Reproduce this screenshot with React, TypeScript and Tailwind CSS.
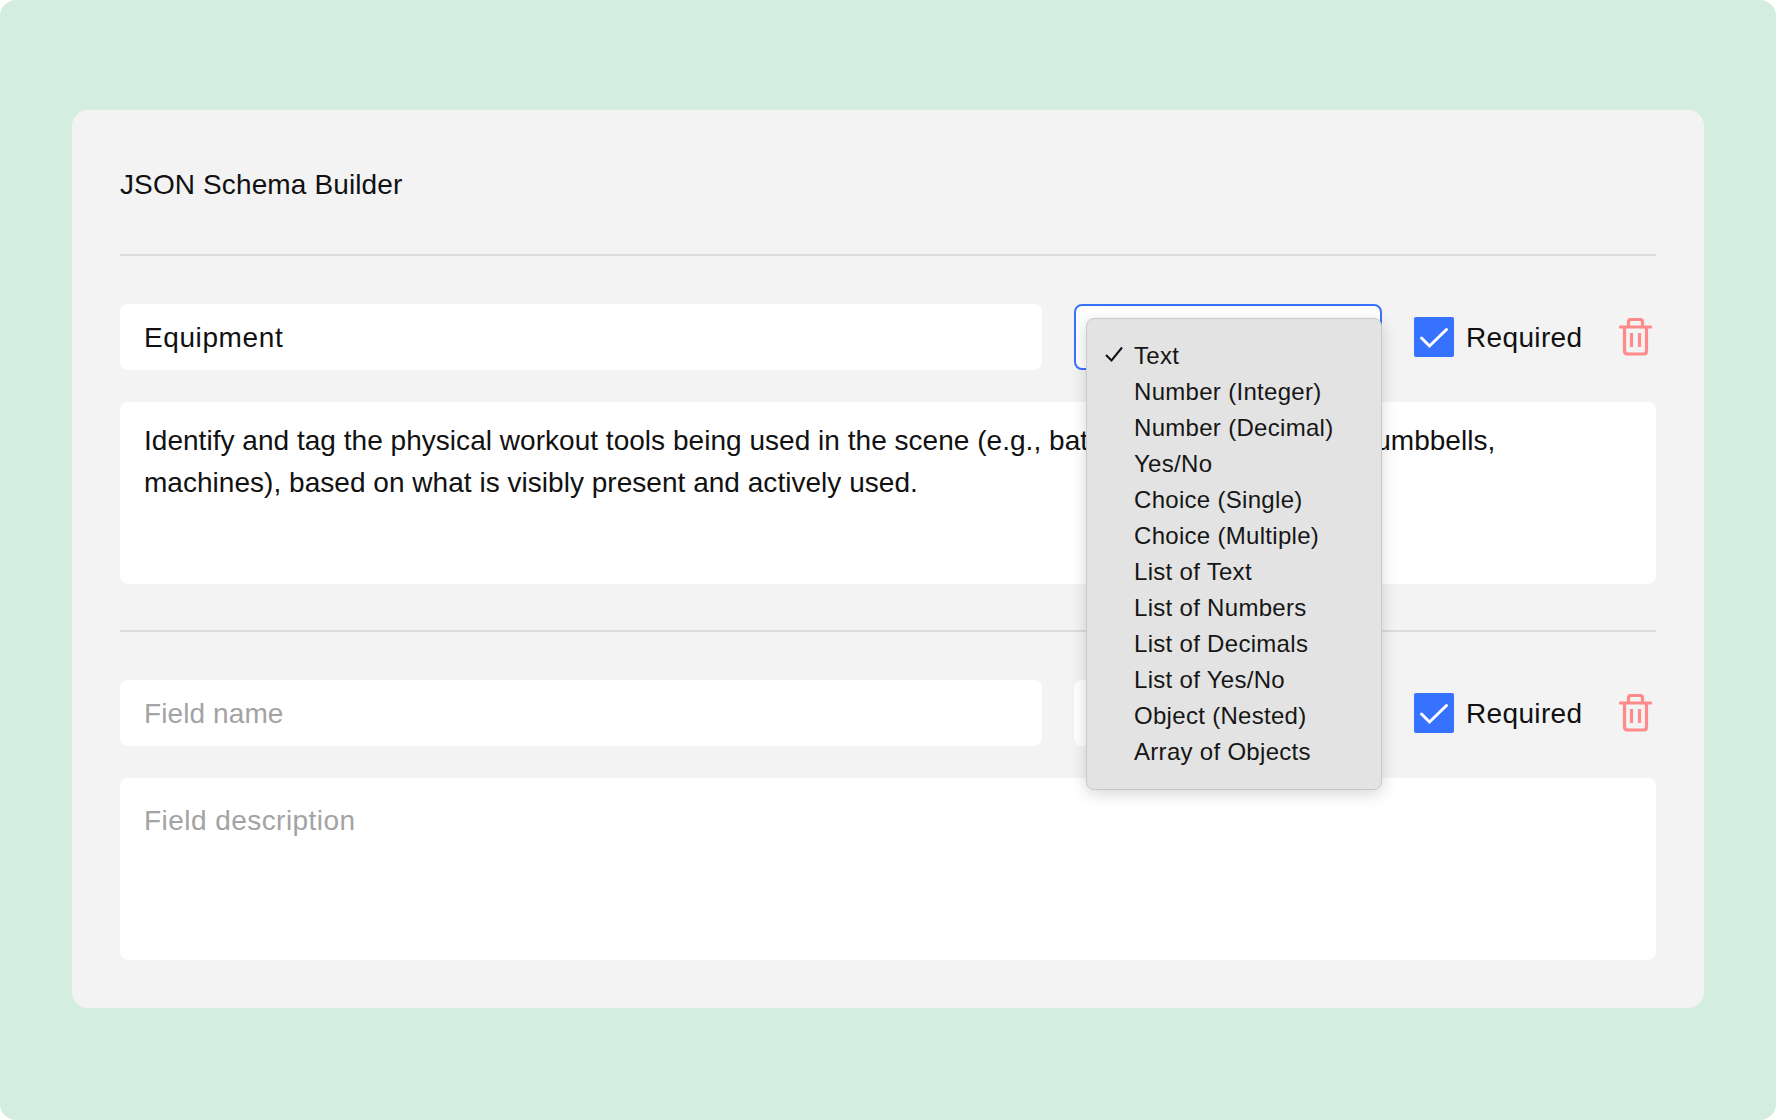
const font = "[font-family:'Liberation_Sans',Arial,sans-serif]";

const items = [
  "Text",
  "Number (Integer)",
  "Number (Decimal)",
  "Yes/No",
  "Choice (Single)",
  "Choice (Multiple)",
  "List of Text",
  "List of Numbers",
  "List of Decimals",
  "List of Yes/No",
  "Object (Nested)",
  "Array of Objects",
];

function Trash() {
  return (
    <svg width="33" height="38" viewBox="0 0 33 38" fill="none" stroke="#ff8a8a" strokeWidth="3.2">
      <path d="M1.5 9H31.5" strokeLinecap="round" />
      <path d="M9.5 8V4C9.5 2.5 10.5 1.5 12 1.5H21C22.5 1.5 23.5 2.5 23.5 4V8" />
      <path d="M5.5 9V33C5.5 35 6.5 36 8.5 36H24.5C26.5 36 27.5 35 27.5 33V9" />
      <path d="M12.5 15V29M20.5 15V29" />
    </svg>
  );
}

function Required() {
  return (
    <div className="flex items-center ml-8">
      <div className="w-10 h-10 rounded-[2px] bg-[#3772ff]">
        <svg width="40" height="40" viewBox="0 0 40 40" fill="none" stroke="white" strokeWidth="3" strokeLinecap="round">
          <path d="M7.5 21L15.5 29L32.5 12.5" />
        </svg>
      </div>
      <span className="ml-3 mt-[2px] text-[28px] leading-[42px] tracking-[0.35px] text-[#111]">Required</span>
      <div className="ml-[37px]">
        <Trash />
      </div>
    </div>
  );
}

function Menu() {
  return (
    <div className="absolute z-10 left-[10px] top-[12px] w-[296px] h-[472px] rounded-[8px] bg-[#e3e3e3] border border-[#c9c9c9] shadow-[0_4px_16px_rgba(0,0,0,0.16)] pt-[19px]">
      {items.map((t, i) => (
        <div key={t} className="relative h-9 pl-[47px] text-[24px] leading-9 tracking-[0.3px] text-[#161616] whitespace-nowrap">
          {i === 0 && (
            <svg className="absolute left-[18px] top-[8px]" width="18" height="16" viewBox="0 0 18 16" fill="none" stroke="#111" strokeWidth="2">
              <path d="M1 9L6.5 14.5L17 1.5" />
            </svg>
          )}
          {t}
        </div>
      ))}
    </div>
  );
}

export default function App() {
  return (
    <div className={`w-[1776px] h-[1120px] bg-white ${font}`}>
      <div className="w-full h-full rounded-[16px] bg-[#d3eee0] pt-[110px] px-[72px]">
        <div className="w-[1632px] h-[898px] rounded-[16px] bg-[#f3f3f3] px-12 pt-[54px]">
          <h1 className="text-[28px] leading-[42px] tracking-[0.12px] text-[#111]">JSON Schema Builder</h1>
          <div className="mt-12 h-[2px] bg-[#dcdcdc]" />

          <div className="mt-12 flex flex-col gap-8">
            <div className="flex items-center">
              <div className="w-[922px] h-[66px] rounded-[8px] bg-white px-6 text-[28px] leading-[68px] tracking-[0.6px] text-[#111]">
                Equipment
              </div>
              <div className="relative ml-8 w-[308px] h-[66px] rounded-[8px] bg-white border-2 border-[#3772ff]">
                <Menu />
              </div>
              <Required />
            </div>
            <div className="h-[182px] rounded-[8px] bg-white px-6 pt-[18px] text-[28px] leading-[42px] tracking-[0.03px] text-[#111]">
              Identify and tag the physical workout tools being used in the scene (e.g., battle ropes, kettle bells, dumbbells,
              <br />
              machines), based on what is visibly present and actively used.
            </div>
          </div>

          <div className="mt-[46px] h-[2px] bg-[#dcdcdc]" />

          <div className="mt-12 flex flex-col gap-8">
            <div className="flex items-center">
              <div className="w-[922px] h-[66px] rounded-[8px] bg-white px-6 text-[28px] leading-[68px] tracking-[0.1px] text-[#a3a3a3]">
                Field name
              </div>
              <div className="ml-8 w-[308px] h-[66px] rounded-[8px] bg-white" />
              <Required />
            </div>
            <div className="h-[182px] rounded-[8px] bg-white px-6 pt-[22px] text-[28px] leading-[42px] tracking-[0.45px] text-[#a3a3a3]">
              Field description
            </div>
          </div>
        </div>
      </div>
    </div>
  );
}
